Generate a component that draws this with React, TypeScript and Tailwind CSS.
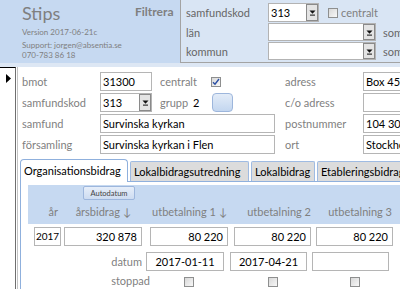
import React from 'react';

const DropArrow = () => (
  <svg width="7" height="7" viewBox="0 0 7 7">
    <path d="M0.5 1.5h6L3.5 4.8z" fill="#111" />
    <rect x="1" y="5.6" width="5" height="1" fill="#111" />
  </svg>
);

const Combo = ({ className, value }: { className: string; value: string }) => (
  <div className={`flex shrink-0 border border-[#b3b3b3] bg-white ${className}`}>
    <div className="flex-1 pl-[2px] flex items-center text-black">{value}</div>
    <div className="w-[12px] flex items-center justify-center bg-[#e4e4e4] border border-[#8a8a8a]">
      <DropArrow />
    </div>
  </div>
);

const Field = ({ className, value, align }: { className: string; value?: string; align?: string }) => (
  <div
    className={`flex shrink-0 items-center border border-[#b5b5b5] bg-white text-black overflow-hidden whitespace-nowrap ${className} ${
      align === 'right' ? 'justify-end pr-[4px]' : align === 'center' ? 'justify-center' : 'pl-[2px]'
    }`}
  >
    {value}
  </div>
);

const Check = ({ checked }: { checked?: boolean }) => (
  <div className="w-[10px] h-[10px] shrink-0 border border-[#8e8f8f] bg-gradient-to-br from-[#d8d8d8] to-[#f8f8f8] flex items-center justify-center">
    {checked && (
      <svg width="8" height="8" viewBox="0 0 8 8">
        <path d="M1 4.2l2 2L7 1" stroke="#2a4ea3" strokeWidth="1.4" fill="none" />
      </svg>
    )}
  </div>
);

const Label = ({ className, children }: { className: string; children: React.ReactNode }) => (
  <span className={`shrink-0 text-[#7f7f7f] whitespace-nowrap ${className}`}>{children}</span>
);

export default function App() {
  return (
    <div className="w-[400px] h-[289px] overflow-hidden bg-white font-['Lato',sans-serif] text-[11px] leading-[13px]">
      {/* header */}
      <div className="h-[63px] bg-[#c6d9f1] flex">
        <div className="w-[135px] shrink-0 pl-[22px] pt-[3px] text-[#7f7f7f]">
          <div className="text-[18px] leading-[20px]">Stips</div>
          <div className="mt-[4px] text-[8px] leading-[10px]">Version 2017-06-21c</div>
          <div className="mt-[3px] text-[8px] leading-[10px]">Support: jorgen@absentia.se</div>
          <div className="text-[8px] leading-[10px]">070-783 86 18</div>
        </div>
        <div className="w-[45px] shrink-0 pt-[5px] font-bold text-[12px] text-[#7f7f7f]">Filtrera</div>
        <div className="flex-1 -mt-px h-[64px] border border-[#a3a3a3] bg-[#d9e5f4] pl-[5px] pt-[3px] flex flex-col gap-[1px]">
          <div className="flex items-center h-[19px]">
            <Label className="w-[82px] text-[#666666]">samfundskod</Label>
            <Combo className="w-[51px] h-[19px]" value="313" />
            <div className="ml-[9px]">
              <Check />
            </div>
            <Label className="ml-[3px]">centralt</Label>
          </div>
          <div className="flex items-center h-[18px]">
            <Label className="w-[82px] text-[#666666]">län</Label>
            <Combo className="w-[108px] h-[18px]" value="" />
            <Label className="ml-[7px] text-[#666666]">som</Label>
          </div>
          <div className="flex items-center h-[18px]">
            <Label className="w-[82px] text-[#666666]">kommun</Label>
            <Combo className="w-[108px] h-[18px]" value="" />
            <Label className="ml-[7px] text-[#666666]">som</Label>
          </div>
        </div>
      </div>
      <div className="h-[4px] bg-[#dde7f4]" />

      {/* body */}
      <div className="flex h-[222px]">
        <div className="w-[16px] shrink-0 border-t border-t-black border-r border-r-[#6f6f6f] pt-[6px] pl-[6px]">
          <svg width="5" height="9" viewBox="0 0 5 9">
            <path d="M0 0l5 4.5L0 9z" fill="#000" />
          </svg>
        </div>
        <div className="w-[2px] shrink-0 border-r border-[#c4c4c4]" />
        <div className="flex-1 min-w-0">
          <div className="ml-[4px] pt-[5px] flex flex-col gap-[2px]">
            <div className="flex items-center h-[19px]">
              <Label className="w-[78px]">bmot</Label>
              <Field className="w-[52px] h-[19px]" value="31300" />
              <Label className="ml-[8px] w-[51px]">centralt</Label>
              <Check checked />
              <Label className="ml-[64px] w-[78px]">adress</Label>
              <Field className="w-[60px] h-[19px]" value="Box 4500" />
            </div>
            <div className="flex items-center h-[19px]">
              <Label className="w-[78px]">samfundskod</Label>
              <Combo className="w-[52px] h-[19px]" value="313" />
              <Label className="ml-[8px] w-[33px]">grupp</Label>
              <span className="w-[19px] shrink-0 text-black">2</span>
              <div className="w-[21px] h-[19px] shrink-0 rounded-[4px] border border-[#9db6dc] bg-gradient-to-b from-[#e3ecf8] to-[#c3d6ef]" />
              <Label className="ml-[52px] w-[78px]">c/o adress</Label>
              <Field className="w-[60px] h-[19px]" value="" />
            </div>
            <div className="flex items-center h-[19px]">
              <Label className="w-[78px]">samfund</Label>
              <Field className="w-[175px] h-[19px]" value="Survinska kyrkan" />
              <Label className="ml-[10px] w-[78px]">postnummer</Label>
              <Field className="w-[60px] h-[19px]" value="104 30" />
            </div>
            <div className="flex items-center h-[19px]">
              <Label className="w-[78px]">församling</Label>
              <Field className="w-[175px] h-[19px]" value="Survinska kyrkan i Flen" />
              <Label className="ml-[10px] w-[78px]">ort</Label>
              <Field className="w-[60px] h-[19px]" value="Stockholm" />
            </div>
          </div>

          {/* tabs */}
          <div className="ml-[2px] mt-[5px]">
            <div className="flex items-end gap-[2px] whitespace-nowrap text-black">
              <div className="relative z-10 -mb-px h-[23px] w-[108px] shrink-0 rounded-t-[4px] border border-b-0 border-[#8fb0dd] bg-white pl-[3px] pt-[4px]">
                Organisationsbidrag
              </div>
              <div className="h-[20px] w-[119px] shrink-0 rounded-t-[2px] border border-b-0 border-[#9fbbe2] bg-[#dcdcdc] pl-[3px] pt-[3px]">
                Lokalbidragsutredning
              </div>
              <div className="h-[20px] w-[64px] shrink-0 rounded-t-[2px] border border-b-0 border-[#9fbbe2] bg-[#dcdcdc] pl-[3px] pt-[3px]">
                Lokalbidrag
              </div>
              <div className="h-[20px] w-[100px] shrink-0 rounded-t-[2px] border border-b-0 border-[#9fbbe2] bg-[#dcdcdc] pl-[3px] pt-[3px]">
                Etableringsbidrag
              </div>
            </div>
            <div className="h-[120px] border-t border-l border-[#8fb0dd] pl-[7px] pt-[3px]">
              <div className="h-[39px] bg-[#c6d9f1] pt-[1px]">
                <div className="ml-[55px] w-[52px] h-[14px] rounded-[2px] border border-[#9db6dc] bg-gradient-to-b from-[#e6eef9] to-[#cddcf1] flex items-center justify-center text-[7.5px] text-[#444444]">
                  Autodatum
                </div>
                <div className="mt-[4px] flex h-[14px] items-center whitespace-nowrap text-[#7f7f7f]">
                  <div className="ml-[6px] w-[27px] text-right pr-[3px]">år</div>
                  <div className="ml-[3px] w-[78px] text-right pr-[11px]">årsbidrag ↓</div>
                  <div className="ml-[8px] w-[78px] text-right pr-[1px]">utbetalning 1 ↓</div>
                  <div className="ml-[6px] w-[77px] text-right">utbetalning 2</div>
                  <div className="ml-[5px] w-[77px] text-right pr-[1px]">utbetalning 3</div>
                </div>
              </div>
              <div className="mt-[3px] flex">
                <div className="ml-[6px] w-[27px] h-[19px] shrink-0 flex items-center justify-center border border-[#b5b5b5] bg-white text-black text-[10px]">
                  2017
                </div>
                <Field className="ml-[3px] w-[78px] h-[19px]" value="320 878" align="right" />
                <Field className="ml-[8px] w-[78px] h-[19px]" value="80 220" align="right" />
                <Field className="ml-[6px] w-[77px] h-[19px]" value="80 220" align="right" />
                <Field className="ml-[5px] w-[77px] h-[19px]" value="80 220" align="right" />
              </div>
              <div className="mt-[6px] flex items-center">
                <Label className="ml-[36px] w-[82px] text-right pr-[4px]">datum</Label>
                <Field className="w-[78px] h-[19px]" value="2017-01-11" align="center" />
                <Field className="ml-[6px] w-[77px] h-[19px]" value="2017-04-21" align="center" />
                <Field className="ml-[5px] w-[77px] h-[19px]" value="" />
              </div>
              <div className="mt-[3px] flex items-start">
                <Label className="ml-[36px] w-[86px] text-right">stoppad</Label>
                <div className="w-[78px] flex justify-center pt-[3px]">
                  <Check />
                </div>
                <div className="ml-[6px] w-[77px] flex justify-center pt-[3px]">
                  <Check />
                </div>
                <div className="ml-[5px] w-[77px] flex justify-center pt-[3px]">
                  <Check />
                </div>
              </div>
            </div>
          </div>
        </div>
      </div>
    </div>
  );
}
